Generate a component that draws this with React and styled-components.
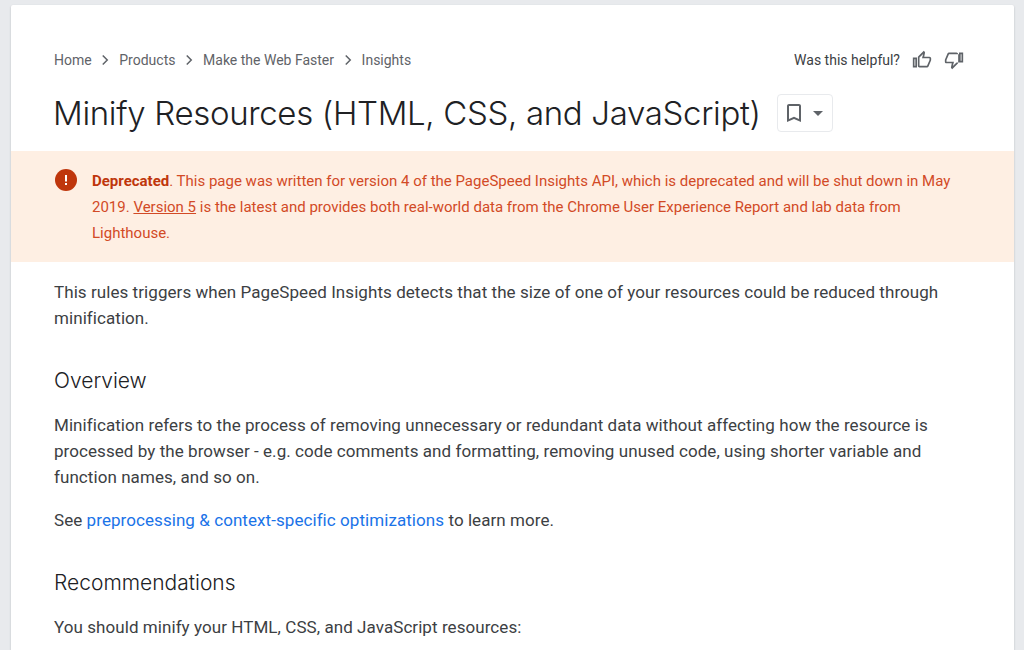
import React from 'react';
import styled, { createGlobalStyle } from 'styled-components';

const Global = createGlobalStyle`
  html, body {
    margin: 0;
    height: 100%;
    overflow: hidden;
    background: #e8eaed;
    font-family: Roboto, "Liberation Sans", sans-serif;
  }
`;

const Page = styled.div`
  padding: 5px 10px 0 11px;
  height: 645px;
  overflow: hidden;
`;

const Card = styled.main`
  background: #fff;
  border-radius: 2px 2px 0 0;
  box-shadow: 0 1px 2px rgba(60, 64, 67, 0.3);
  min-height: 645px;
`;

const Head = styled.header`
  padding: 43px 50px 0 43px;
`;

const TopRow = styled.div`
  display: flex;
  align-items: center;
  justify-content: space-between;
  height: 24px;
`;

const Crumbs = styled.nav`
  display: flex;
  align-items: center;
  gap: 4.8px;
  font-size: 14px;
  color: #5f6368;
`;

const Feedback = styled.div`
  display: flex;
  align-items: center;
  font-size: 14px;
  color: #3c4043;
  gap: 12px;
`;

const ThumbButton = styled.span`
  display: flex;
  color: #5f6368;
`;

const TitleRow = styled.div`
  display: flex;
  align-items: center;
  gap: 16px;
  margin-top: 21px;
`;

const Title = styled.h1`
  margin: 0 0 0 -1px;
  font-family: Inter, Roboto, sans-serif;
  font-weight: 300;
  font-size: 33px;
  letter-spacing: -0.33px;
  line-height: 40px;
  color: #202124;
`;

const BookmarkButton = styled.button`
  display: flex;
  align-items: center;
  gap: 7px;
  width: 56px;
  height: 38px;
  padding: 0 0 0 4px;
  background: #fff;
  border: 1px solid #e8eaed;
  border-radius: 4px;
  color: #5f6368;
`;

const Caret = styled.span`
  width: 0;
  height: 0;
  border-left: 5px solid transparent;
  border-right: 5px solid transparent;
  border-top: 5px solid #5f6368;
`;

const Banner = styled.aside`
  display: flex;
  margin-top: 18px;
  padding: 17px 43px 18px 43px;
  gap: 14px;
  background: #feefe3;
  color: #d24a26;
  font-size: 15px;
  line-height: 26px;
  height: 111px;
  box-sizing: border-box;
`;

const BannerIcon = styled.span`
  flex: none;
  display: flex;
  width: 24px;
  height: 24px;
`;

const BannerText = styled.p`
  margin: 0;
  strong {
    font-weight: 700;
    color: #bf360c;
  }
  a {
    color: inherit;
    text-decoration: underline;
  }
`;

const Body = styled.article`
  padding: 17px 50px 0 43px;
  font-size: 17px;
  letter-spacing: 0.065px;
  line-height: 26px;
  color: #3c4043;
`;

const Para = styled.p`
  margin: 0 0 17px;
  a {
    color: #1a73e8;
    text-decoration: none;
  }
`;

const Subhead = styled.h2`
  margin: 37px 0 18px;
  font-family: Inter, Roboto, sans-serif;
  font-weight: 300;
  font-size: 21px;
  letter-spacing: 0;
  line-height: 26px;
  color: #202124;
`;

function Chevron() {
  return (
    <svg width="18" height="18" viewBox="0 0 24 24" fill="none" stroke="#5f6368" strokeWidth="2">
      <path d="M9 6l6 6-6 6" />
    </svg>
  );
}

function ThumbUp() {
  return (
    <svg width="20" height="20" viewBox="0 0 24 24" fill="currentColor">
      <path d="M9 21h9c.83 0 1.54-.5 1.84-1.22l3.02-7.05c.09-.23.14-.47.14-.73v-2c0-1.100-.9-2-2-2h-6.310l.95-4.570.03-.32c0-.41-.17-.79-.44-1.060L14.170 1 7.580 7.590C7.220 7.950 7 8.450 7 9v10c0 1.100.9 2 2 2zM9 9l4.340-4.340L12 10h9v2l-3 7H9V9z" />
      <path d="M1 9h5v12H1zM3 11v8h1v-8z" />
    </svg>
  );
}

function ThumbDown() {
  return (
    <svg width="20" height="20" viewBox="0 0 24 24" fill="currentColor">
      <path d="M15 3H6c-.83 0-1.540.5-1.840 1.220l-3.020 7.050c-.09.23-.14.47-.14.73v2c0 1.100.9 2 2 2h6.310l-.95 4.570-.03.32c0 .41.17.79.44 1.060L9.830 23l6.590-6.590c.36-.36.58-.86.58-1.410V5c0-1.100-.9-2-2-2zm0 12l-4.340 4.340L12 14H3v-2l3-7h12v10z" />
      <path d="M18 3h5v12h-5zM20 5v8h1V5z" />
    </svg>
  );
}

function Bookmark() {
  return (
    <svg width="24" height="24" viewBox="0 0 24 24" fill="currentColor">
      <path d="M17 3H7c-1.100 0-2 .9-2 2v16l7-3 7 3V5c0-1.100-.9-2-2-2zm0 15l-5-2.180L7 18V5h10v13z" />
    </svg>
  );
}

function Alert() {
  return (
    <svg width="24" height="24" viewBox="0 0 24 24">
      <circle cx="12" cy="12" r="11" fill="#bf360c" />
      <rect x="11" y="7" width="2" height="6.500" fill="#fff" />
      <rect x="11" y="15" width="2" height="2" fill="#fff" />
    </svg>
  );
}

export default function App() {
  const crumbs = ['Home', 'Products', 'Make the Web Faster', 'Insights'];
  return (
    <Page>
      <Global />
      <Card>
        <Head>
          <TopRow>
            <Crumbs>
              {crumbs.map((c, i) => (
                <React.Fragment key={c}>
                  {i > 0 && <Chevron />}
                  <span>{c}</span>
                </React.Fragment>
              ))}
            </Crumbs>
            <Feedback>
              <span>Was this helpful?</span>
              <ThumbButton><ThumbUp /></ThumbButton>
              <ThumbButton><ThumbDown /></ThumbButton>
            </Feedback>
          </TopRow>
          <TitleRow>
            <Title>Minify Resources (HTML, CSS, and JavaScript)</Title>
            <BookmarkButton aria-label="Bookmark">
              <Bookmark />
              <Caret />
            </BookmarkButton>
          </TitleRow>
        </Head>
        <Banner>
          <BannerIcon><Alert /></BannerIcon>
          <BannerText>
            <strong>Deprecated</strong>. This page was written for version 4 of the PageSpeed Insights API, which is deprecated and will be shut down in May 2019. <a href="#v5">Version 5</a> is the latest and provides both real-world data from the Chrome User Experience Report and lab data from Lighthouse.
          </BannerText>
        </Banner>
        <Body>
          <Para>This rules triggers when PageSpeed Insights detects that the size of one of your resources could be reduced through minification.</Para>
          <Subhead>Overview</Subhead>
          <Para>Minification refers to the process of removing unnecessary or redundant data without affecting how the resource is processed by the browser - e.g. code comments and formatting, removing unused code, using shorter variable and function names, and so on.</Para>
          <Para>See <a href="#opt">preprocessing &amp; context-specific optimizations</a> to learn more.</Para>
          <Subhead>Recommendations</Subhead>
          <Para>You should minify your HTML, CSS, and JavaScript resources:</Para>
        </Body>
      </Card>
    </Page>
  );
}
